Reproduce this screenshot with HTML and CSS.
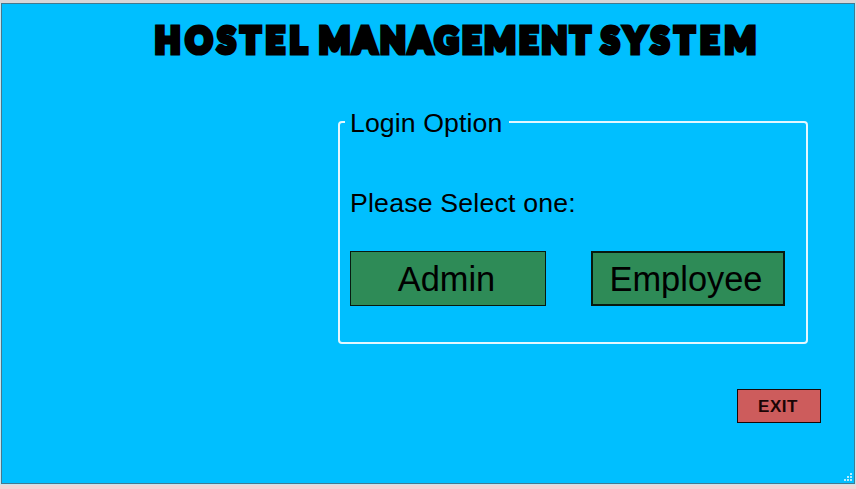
FILE: index.html
```
<!DOCTYPE html>
<html lang="en">
<head>
<meta charset="utf-8">
<title>Hostel Management System</title>
<link rel="stylesheet" href="styles.css">
</head>
<body>
<main class="window">
  <h1 class="title">
    <svg class="title-art" width="620" height="60" viewBox="0 0 620 60" role="img">
      <g transform="scale(.92 1)">
        <text class="word" x="11" y="43.5" textLength="165" lengthAdjust="spacing">HOSTEL</text>
        <text class="word" x="189" y="43.5" textLength="295" lengthAdjust="spacing">MANAGEMENT</text>
        <text class="word" x="496" y="43.5" textLength="168" lengthAdjust="spacing">SYSTEM</text>
      </g>
    </svg>
  </h1>
  <fieldset class="group">
    <legend class="legend">Login Option</legend>
    <p class="prompt">Please Select one:</p>
    <div class="choices">
      <button class="choice admin">Admin</button>
      <button class="choice employee">Employee</button>
    </div>
  </fieldset>
  <button class="exit">EXIT</button>
  <svg class="grip" width="10" height="10" viewBox="0 0 10 10">
    <path d="M7 0h2v2h-2zM4 3h2v2h-2zM7 3h2v2h-2zM1 6h2v2h-2zM4 6h2v2h-2zM7 6h2v2h-2z"/>
  </svg>
</main>
</body>
</html>
```
FILE: styles.css
```
* { box-sizing: border-box; }
body {
  margin: 0;
  width: 856px;
  height: 489px;
  padding: 3px 1px 5px;
  overflow: hidden;
  background: linear-gradient(#d9d6d8 0 3px, #c5e5ef 3px 485px, #f1d5d6 485px);
  font-family: "Liberation Sans", Arial, sans-serif;
  color: #000;
}
.window {
  position: relative;
  display: flex;
  flex-direction: column;
  width: 854px;
  height: 481px;
  border: 1px solid #46788e;
  background: #00bfff;
}
.title { margin: 6px 0 0 143px; height: 60px; line-height: 0; }
.title-art { overflow: visible; }
.word {
  font-family: Lato, sans-serif;
  font-weight: 900;
  font-size: 35.5px;
  stroke: #000;
  stroke-width: 5.2px;
  stroke-linejoin: miter;
}
.group {
  margin: 38px 0 0 336px;
  padding: 0;
  width: 470px;
  height: 236px;
  min-width: 0;
  border: 2px solid #e2f7ff;
  border-radius: 4px;
}
.legend {
  margin-left: 5px;
  padding: 0 6px 0 5px;
  width: 164px;
  height: 28px;
  font-size: 26.67px;
  line-height: 30px;
  letter-spacing: 0.1px;
  white-space: nowrap;
}
.prompt {
  margin: 52px 0 0 10px;
  font-size: 26.67px;
  line-height: 30px;
  letter-spacing: 0.2px;
}
.choices { display: flex; gap: 45px; margin: 33px 0 0 10px; }
.choice {
  height: 55px;
  padding: 1px 0 0;
  border: 1px solid #071a10;
  border-radius: 0;
  background: #2e8b57;
  color: #000;
  font: 34.4px/50px "Liberation Sans", Arial, sans-serif;
}
.admin { width: 196px; padding-right: 3px; }
.employee { width: 194px; border-width: 2px; padding-right: 4px; }
.exit {
  align-self: flex-end;
  margin: 45px 33px 0 0;
  width: 84px;
  height: 34px;
  padding: 1px 2px 0 0;
  border: 1px solid #160808;
  border-radius: 0;
  background: #cd5c5c;
  color: #1a0505;
  font: bold 17px/30px "Liberation Sans", Arial, sans-serif;
  letter-spacing: 0.5px;
}
.grip { position: absolute; right: 1px; bottom: 0; fill: #b5ebfc; }
```
